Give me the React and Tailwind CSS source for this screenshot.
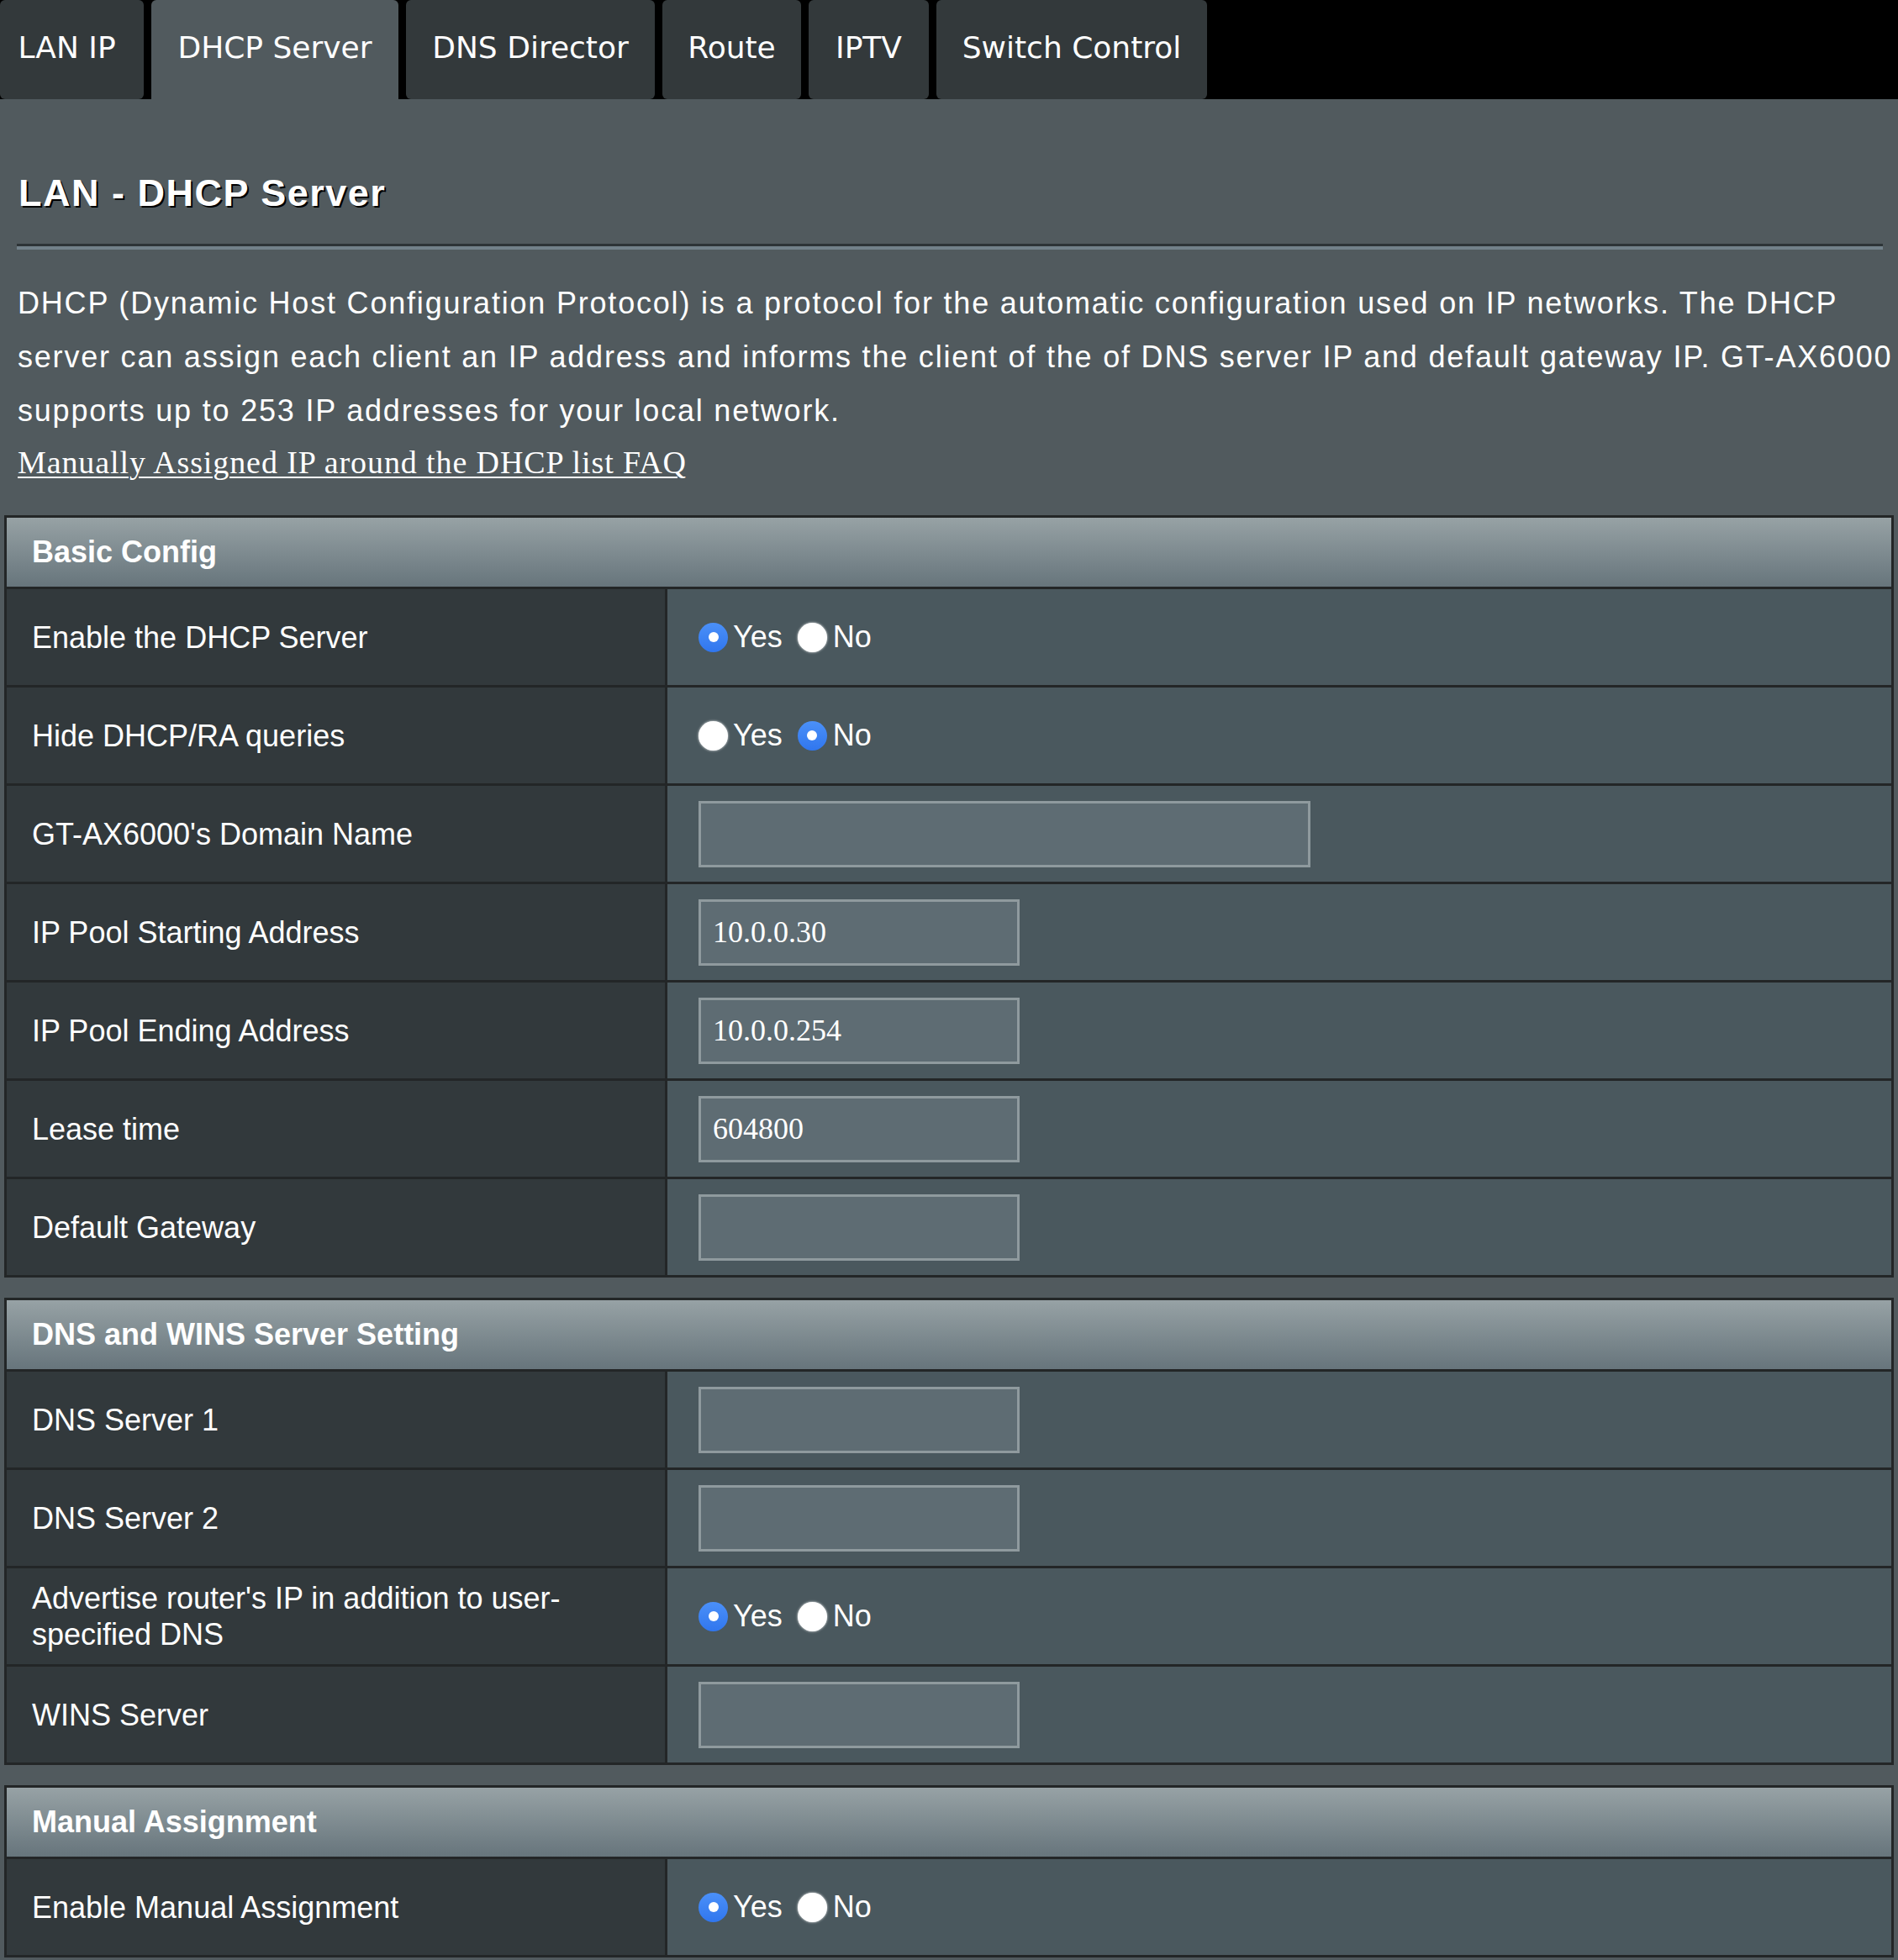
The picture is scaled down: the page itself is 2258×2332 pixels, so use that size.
import React from "react";

const Radio = ({ checked }) =>
  checked ? (
    <span className="flex h-[35px] w-[35px] shrink-0 items-center justify-center rounded-full bg-linear-to-b from-[#4b90f8] to-[#3076ee]">
      <span className="h-[12px] w-[12px] rounded-full bg-white" />
    </span>
  ) : (
    <span className="block h-[35px] w-[35px] shrink-0 rounded-full bg-white shadow-[0_0_3px_rgba(255,255,255,0.9)]" />
  );

const YesNo = ({ yes }) => (
  <div className="flex items-center text-[36px] text-white">
    <Radio checked={yes} />
    <span className="ml-[6px]">Yes</span>
    <div className="ml-[18px] flex items-center">
      <Radio checked={!yes} />
    </div>
    <span className="ml-[7px]">No</span>
  </div>
);

const Input = ({ wide, value }) => (
  <div
    className={
      (wide ? "w-[728px] " : "w-[382px] ") +
      "flex h-[79px] items-center border-[3px] border-[#8f9a9e] bg-[#5e6c73] pl-[14px] font-['Liberation_Serif','Times_New_Roman',serif] text-[36px] text-white"
    }
  >
    {value}
  </div>
);

const Row = ({ label, children }) => (
  <div className="grid h-[114px] grid-cols-[783px_1fr] gap-x-[3px]">
    <div className="flex items-center bg-[#32393c] pl-[30px] pr-[20px] text-[36px] leading-[43px] text-white">
      {label}
    </div>
    <div className="flex items-center bg-[#4a585e] pl-[37px]">{children}</div>
  </div>
);

const Table = ({ title, children, className = "" }) => (
  <div
    className={
      "mx-[5px] flex flex-col gap-y-[3px] border-[3px] border-[#232627] bg-[#232627] " +
      className
    }
  >
    <div className="flex h-[82px] items-center bg-linear-to-b from-[#97a2a5] to-[#67757c] pl-[30px] text-[36px] font-bold text-white">
      {title}
    </div>
    {children}
  </div>
);

const tabs = [
  { name: "LAN IP", w: "w-[171px] pr-[12px]" },
  { name: "DHCP Server", w: "w-[294px]", active: true },
  { name: "DNS Director", w: "w-[296px]" },
  { name: "Route", w: "w-[165px]" },
  { name: "IPTV", w: "w-[143px]" },
  { name: "Switch Control", w: "w-[322px]" },
];

export default function App() {
  return (
    <div className="min-h-screen w-[2258px] overflow-hidden bg-[#515a5e] font-['Liberation_Sans',Arial,sans-serif]">
      {/* Tab bar */}
      <div className="flex h-[118px] gap-x-[9px] bg-black">
        {tabs.map((t) => (
          <div
            key={t.name}
            className={
              t.w +
              " flex items-center justify-center pb-[5px] font-['DejaVu_Sans',Verdana,sans-serif] text-[36px] text-white " +
              (t.active ? "rounded-t-[6px] bg-[#515a5e]" : "rounded-[6px] bg-[#33393b]")
            }
          >
            {t.name}
          </div>
        ))}
      </div>

      {/* Title */}
      <div className="mt-[89px] pl-[22px] text-[45px] font-bold leading-none tracking-[1.5px] text-white [text-shadow:2px_2px_0_#000]">
        LAN - DHCP Server
      </div>
      <div className="ml-[20px] mr-[18px] mt-[38px]">
        <div className="h-[3px] bg-[#2d3437]" />
        <div className="h-[4px] bg-[#72818a]" />
      </div>

      {/* Description */}
      <div className="mt-[32px] whitespace-nowrap px-[21px] text-[36px] leading-[64px] tracking-[1.8px] text-white">
        DHCP (Dynamic Host Configuration Protocol) is a protocol for the automatic configuration used on IP networks. The DHCP
        <br />
        server can assign each client an IP address and informs the client of the of DNS server IP and default gateway IP. GT-AX6000
        <br />
        supports up to 253 IP addresses for your local network.
      </div>
      <div className="-mt-[3px] h-[64px] px-[21px] leading-[64px]">
        <a
          href="#"
          className="font-['Liberation_Serif','Times_New_Roman',serif] text-[38px] tracking-[0.9px] text-white underline decoration-[2px] underline-offset-[4px]"
        >
          Manually Assigned IP around the DHCP list FAQ
        </a>
      </div>

      {/* Basic Config */}
      <Table title="Basic Config" className="mt-[31px]">
        <Row label="Enable the DHCP Server">
          <YesNo yes />
        </Row>
        <Row label="Hide DHCP/RA queries">
          <YesNo yes={false} />
        </Row>
        <Row label="GT-AX6000's Domain Name">
          <Input wide value="" />
        </Row>
        <Row label="IP Pool Starting Address">
          <Input value="10.0.0.30" />
        </Row>
        <Row label="IP Pool Ending Address">
          <Input value="10.0.0.254" />
        </Row>
        <Row label="Lease time">
          <Input value="604800" />
        </Row>
        <Row label="Default Gateway">
          <Input value="" />
        </Row>
      </Table>

      {/* DNS and WINS */}
      <Table title="DNS and WINS Server Setting" className="mt-[24px]">
        <Row label="DNS Server 1">
          <Input value="" />
        </Row>
        <Row label="DNS Server 2">
          <Input value="" />
        </Row>
        <Row
          label={
            <span>
              Advertise router's IP in addition to user-
              <br />
              specified DNS
            </span>
          }
        >
          <YesNo yes />
        </Row>
        <Row label="WINS Server">
          <Input value="" />
        </Row>
      </Table>

      {/* Manual Assignment */}
      <Table title="Manual Assignment" className="mt-[24px]">
        <Row label="Enable Manual Assignment">
          <YesNo yes />
        </Row>
      </Table>
      <div className="h-[40px]" />
    </div>
  );
}
